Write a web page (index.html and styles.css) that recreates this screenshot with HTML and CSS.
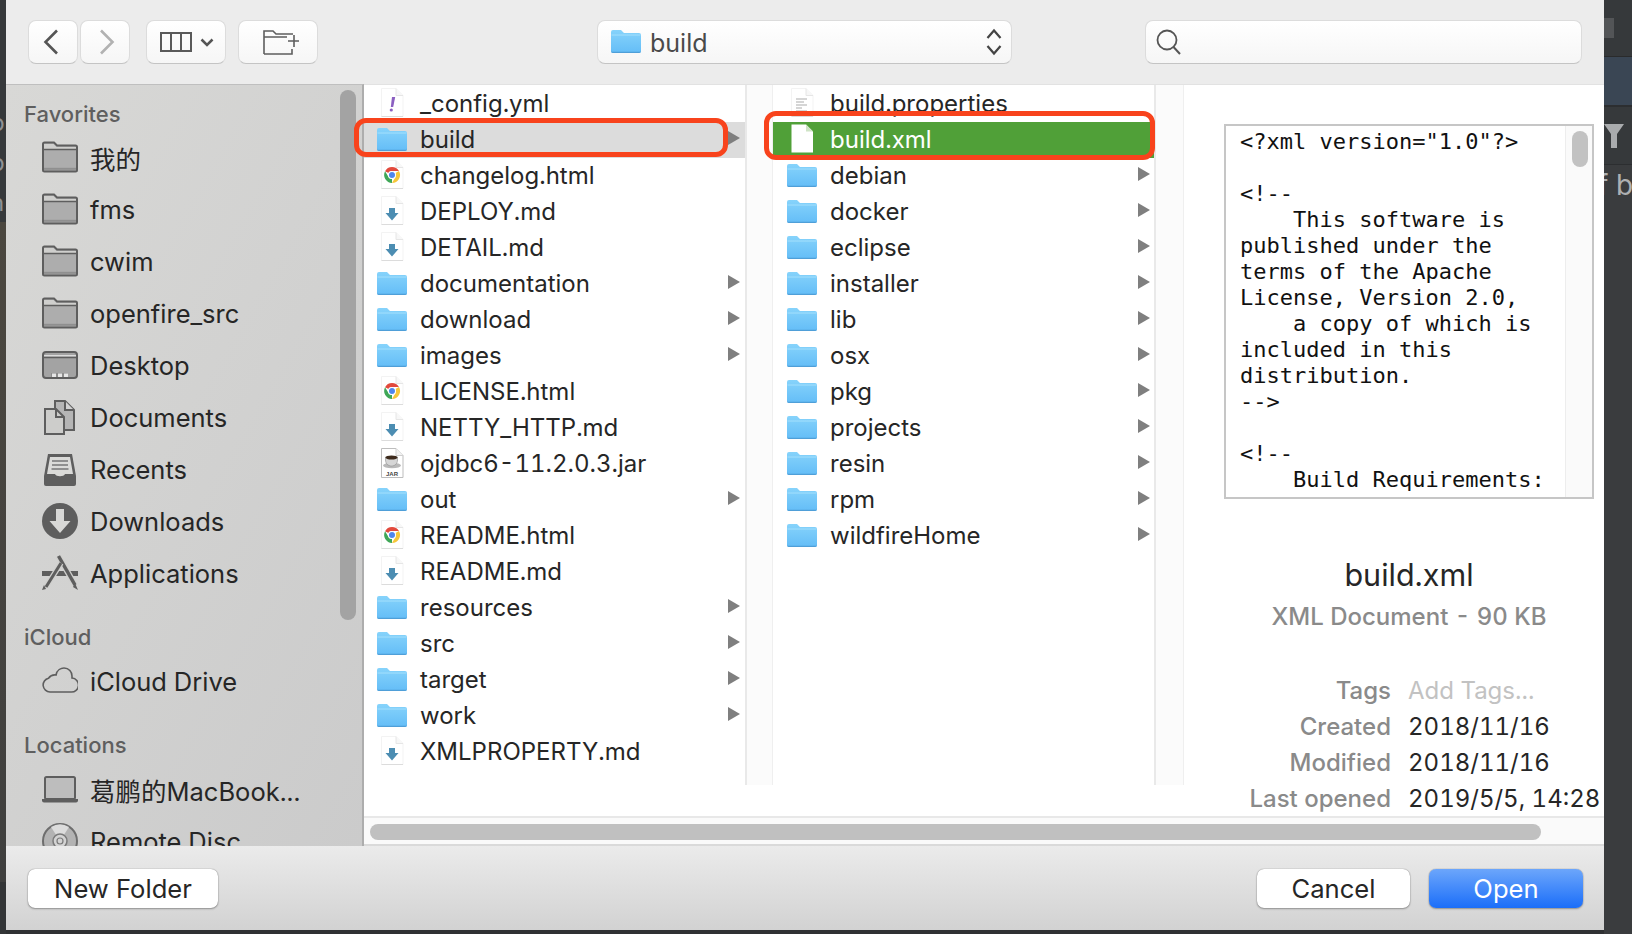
FILE: index.html
```html
<!DOCTYPE html>
<html lang="en">
<head>
<meta charset="utf-8">
<title>Open</title>
<link rel="stylesheet" href="styles.css">
</head>
<body>
<svg class="defs" width="0" height="0" aria-hidden="true">
  <defs>
    <linearGradient id="blue" x1="0" y1="0" x2="0" y2="1"><stop offset="0" stop-color="#86d3fb"/><stop offset="1" stop-color="#64bdf7"/></linearGradient>
    <symbol id="folder" viewBox="0 0 30 30">
      <path d="M0 6a2 2 0 0 1 2-2h8l3 3h15a2 2 0 0 1 2 2v16a2 2 0 0 1-2 2H2a2 2 0 0 1-2-2z" fill="url(#blue)"/>
      <path d="M0 25a2 2 0 0 0 2 2h26a2 2 0 0 0 2-2v-.7a1.5 1.5 0 0 1-1.500 1.500H1.500A1.500 1.500 0 0 1 0 24.300z" fill="#4f9fd8"/>
      <path d="M.5 9h29" stroke="#a3dffc" stroke-width="1"/>
    </symbol>
    <symbol id="page" viewBox="0 0 30 30">
      <path d="M4.500.5H19l7 7v21H4.500z" fill="#fff" stroke="#f3f3f3"/>
      <path d="M19 .5v7h7" fill="#f7f7f7" stroke="#e6e6e6"/>
      <path d="M4.500 28.500H26" stroke="#dcdcdc"/>
    </symbol>
    <symbol id="md" viewBox="0 0 30 30">
      <use href="#page"/>
      <path d="M12 12h6v5h3.500L15 24.500 8.500 17H12z" fill="#4c8db2"/>
    </symbol>
    <symbol id="chrome" viewBox="0 0 30 30">
      <use href="#page"/>
      <g transform="translate(15 15) scale(1.07) translate(-15 -15)">
        <path d="M15 7.500a7.500 7.500 0 0 1 6.500 3.750H15a3.750 3.750 0 0 0-3.250 1.900L8.500 11.500A7.500 7.500 0 0 1 15 7.500z" fill="#e2493c"/>
        <path d="M21.500 11.250A7.500 7.500 0 0 1 15 22.500l3.250-5.600a3.750 3.750 0 0 0 0-3.800z" fill="#f6c73a"/>
        <path d="M15 22.500A7.500 7.500 0 0 1 8.500 11.500l3.250 5.400a3.750 3.750 0 0 0 3.250 1.850z" fill="#3fa757"/>
        <circle cx="15" cy="15" r="3.300" fill="#4f86ec" stroke="#fff" stroke-width="1"/>
      </g>
    </symbol>
    <symbol id="yml" viewBox="0 0 30 30">
      <use href="#page"/>
      <path d="M15 9h3.200l-2 10h-2.400z" fill="#8b5fc1"/>
      <circle cx="14.300" cy="22" r="1.600" fill="#8b5fc1"/>
    </symbol>
    <symbol id="props" viewBox="0 0 30 30">
      <use href="#page"/>
      <path d="M9 11h11M9 14h8M9 17h11M9 20h6M9 23h11" stroke="#c8c8c8" stroke-width="1.300"/>
    </symbol>
    <symbol id="jar" viewBox="0 0 30 30">
      <path d="M4.500.5H19l7 7v22H4.500z" fill="#fff" stroke="#bdbdbd"/>
      <path d="M19 .5v7h7" fill="#f2f2f2" stroke="#cfcfcf"/>
      <ellipse cx="15" cy="17.500" rx="9" ry="2.800" fill="#b9b9b9"/>
      <path d="M8.500 9h12v3c0 3.500-2.500 6-6 6s-6-2.500-6-6z" fill="#d6d6d6" stroke="#8d8d8d" stroke-width=".6"/>
      <ellipse cx="14.500" cy="9.500" rx="6" ry="2" fill="#3d2a1c"/>
      <text x="15" y="27.500" class="jar-label">JAR</text>
    </symbol>
    <symbol id="sfolder" viewBox="0 0 36 36">
      <path d="M1 5a1.500 1.500 0 0 1 1.500-1.500h9.500l3 3h18.500A1.500 1.500 0 0 1 35 8v23a1.500 1.500 0 0 1-1.500 1.500h-31A1.500 1.500 0 0 1 1 31z" fill="#adadad" stroke="#5e5e5e" stroke-width="2"/>
      <path d="M2 5h9.500l3 3h19.500v3H2z" fill="#cfcfcd"/>
      <path d="M2 10.500h32" stroke="#5e5e5e" stroke-width="1.500"/>
      <path d="M2 29.800h32" stroke="#8f8f8f" stroke-width="2"/>
    </symbol>
    <symbol id="desktop" viewBox="0 0 36 36">
      <rect x="1" y="5" width="34" height="26" rx="3" fill="#a3a3a3" stroke="#5e5e5e" stroke-width="2"/>
      <path d="M2 8h32v1.500H2z" fill="#dcdcdc"/>
      <path d="M2 10.500h32" stroke="#5e5e5e" stroke-width="1.500"/>
      <path d="M9 26h17v4H9z" fill="#8d8d8d"/>
      <path d="M10 26.500h4v3.500h-4zM16 26.500h4v3.500h-4zM22 26.500h4v3.500h-4z" fill="#e6e6e6"/>
    </symbol>
    <symbol id="docs" viewBox="0 0 36 36">
      <path d="M13 2h10l9 9v20H13z" fill="#b5b5b5" stroke="#5e5e5e" stroke-width="2"/>
      <path d="M23 2v9h9" fill="#d2d2d2" stroke="#5e5e5e" stroke-width="2"/>
      <path d="M3 10h11l8 8v17H3z" fill="#cdcdcb" stroke="#5e5e5e" stroke-width="2"/>
      <path d="M14 10v8h8" fill="none" stroke="#5e5e5e" stroke-width="2"/>
    </symbol>
    <symbol id="recents" viewBox="0 0 36 36">
      <path d="M6 3h24l4 22v8a2 2 0 0 1-2 2H4a2 2 0 0 1-2-2v-8z" fill="#5e5e5e"/>
      <path d="M8 6h20l3 17h-8c-1 3-9 3-10 0H5z" fill="#dadad8"/>
      <path d="M10 10h16M10 14h16M9.500 18h17" stroke="#777" stroke-width="1.500"/>
    </symbol>
    <symbol id="downloads" viewBox="0 0 36 36">
      <circle cx="18" cy="18" r="18" fill="#5e5e5e"/>
      <path d="M14 6h8v12h6.500L18 30 7.500 18H14z" fill="#d8d8d6"/>
    </symbol>
    <symbol id="apps" viewBox="0 0 36 36">
      <path d="M0 16h36v5H0z" fill="#5e5e5e"/>
      <path d="M16.500 1 33 30" stroke="#d0d0ce" stroke-width="6"/>
      <path d="M16.500 1 33 30" stroke="#5e5e5e" stroke-width="3.500"/>
      <path d="m19 8-15 24" stroke="#d0d0ce" stroke-width="5.500"/>
      <path d="m19 8-15 24" stroke="#5e5e5e" stroke-width="3"/>
      <path d="m2 30-2 5 4-1zM33 28l3 7-5-3z" fill="#5e5e5e"/>
    </symbol>
    <symbol id="cloud" viewBox="0 0 36 36">
      <path d="M8 29a7 7 0 0 1-1.500-13.800A8 8 0 0 1 14 12c1-5 5-7 8-7 5 0 8 4 8 8v2a7 7 0 0 1-1 14z" fill="none" stroke="#5e5e5e" stroke-width="1.600"/>
    </symbol>
    <symbol id="laptop" viewBox="0 0 36 36">
      <rect x="3" y="6" width="30" height="22" rx="1.500" fill="#bdbdbd" stroke="#5e5e5e" stroke-width="2"/>
      <path d="M0 28h36v1.500a2 2 0 0 1-2 2H2a2 2 0 0 1-2-2z" fill="#5e5e5e"/>
    </symbol>
    <symbol id="disc" viewBox="0 0 36 36">
      <circle cx="18" cy="18" r="17" fill="#b3b3b3" stroke="#6e6e6e" stroke-width="2"/>
      <path d="M18 18 9 4a17 17 0 0 1 18 0z" fill="#dcdcdc"/>
      <path d="M18 18 9 32a17 17 0 0 0 18 0z" fill="#dcdcdc"/>
      <circle cx="18" cy="18" r="7" fill="#d3d3d3" stroke="#7a7a7a" stroke-width="1.500"/>
      <circle cx="18" cy="18" r="3" fill="none" stroke="#7a7a7a" stroke-width="1.200"/>
    </symbol>
  </defs>
</svg>

<div class="page">
  <div class="edge-left">
    <div class="el-dark"><span>b</span><span>p</span><span>n</span></div>
    <div class="el-brown"></div>
    <div class="el-dark2"></div>
  </div>

  <main class="dialog">
    <header class="toolbar">
      <div class="btn nav"><svg class="back-ic" width="16" height="26" viewBox="0 0 16 26"><path d="M14 1.500 2.500 13 14 24.500" fill="none" stroke="#555" stroke-width="2.600"/></svg></div>
      <div class="btn nav second"><svg class="fwd-ic" width="16" height="26" viewBox="0 0 16 26"><path d="M2 1.500 13.500 13 2 24.500" fill="none" stroke="#b2b2b2" stroke-width="2.600"/></svg></div>
      <div class="btn view">
        <svg width="32" height="20" viewBox="0 0 32 20"><path d="M1 1h30v18H1zM11 1v18M21 1v18" fill="none" stroke="#5a5a5a" stroke-width="2"/></svg>
        <svg width="14" height="9" viewBox="0 0 14 9"><path d="M1.500 1.500 7 7l5.500-5.500" fill="none" stroke="#555" stroke-width="2.500"/></svg>
      </div>
      <div class="btn newf">
        <svg width="36" height="26" viewBox="0 0 36 26"><path d="M1 25V2h9l3 3h17M1 8h23M29 20v5H1" fill="none" stroke="#5e5e5e" stroke-width="1.600"/><path d="M31 6v12M25 12h11" fill="none" stroke="#5e5e5e" stroke-width="1.600"/></svg>
      </div>
      <div class="btn path">
        <svg class="pf" width="30" height="30" viewBox="0 0 30 30"><use href="#folder"/></svg>
        <span class="path-name">build</span>
        <svg class="updown" width="18" height="28" viewBox="0 0 18 28"><path d="M2.500 10 9 2.500l6.500 7.500M2.500 18 9 25.500l6.500-7.500" fill="none" stroke="#444" stroke-width="2.200"/></svg>
      </div>
      <div class="btn search">
        <svg width="26" height="26" viewBox="0 0 26 26"><circle cx="11" cy="11" r="9.500" fill="none" stroke="#555" stroke-width="1.800"/><path d="m17.500 18 6.500 7" stroke="#555" stroke-width="2"/></svg>
      </div>
    </header>

    <div class="main">
      <aside class="sidebar">
        <h2 class="s-head">Favorites</h2>
        <div class="s-row"><svg class="s-ic"><use href="#sfolder"/></svg><span>我的</span></div>
        <div class="s-row"><svg class="s-ic"><use href="#sfolder"/></svg><span>fms</span></div>
        <div class="s-row"><svg class="s-ic"><use href="#sfolder"/></svg><span>cwim</span></div>
        <div class="s-row"><svg class="s-ic"><use href="#sfolder"/></svg><span>openfire_src</span></div>
        <div class="s-row"><svg class="s-ic"><use href="#desktop"/></svg><span>Desktop</span></div>
        <div class="s-row"><svg class="s-ic"><use href="#docs"/></svg><span>Documents</span></div>
        <div class="s-row"><svg class="s-ic"><use href="#recents"/></svg><span>Recents</span></div>
        <div class="s-row"><svg class="s-ic"><use href="#downloads"/></svg><span>Downloads</span></div>
        <div class="s-row"><svg class="s-ic"><use href="#apps"/></svg><span>Applications</span></div>
        <h2 class="s-head s-next">iCloud</h2>
        <div class="s-row"><svg class="s-ic"><use href="#cloud"/></svg><span>iCloud Drive</span></div>
        <h2 class="s-head s-next">Locations</h2>
        <div class="s-row"><svg class="s-ic"><use href="#laptop"/></svg><span>葛鹏的MacBook...</span></div>
        <div class="s-row"><svg class="s-ic"><use href="#disc"/></svg><span>Remote Disc</span></div>
        <div class="s-thumb"></div>
      </aside>

      <section class="browser">
        <div class="columns">
          <div class="col col-a">
            <div class="row"><svg class="ic"><use href="#yml"/></svg><span>_config.yml</span></div>
            <div class="row on-grey"><svg class="ic"><use href="#folder"/></svg><span>build</span><i class="arrow"></i></div>
            <div class="row"><svg class="ic"><use href="#chrome"/></svg><span>changelog.html</span></div>
            <div class="row"><svg class="ic"><use href="#md"/></svg><span>DEPLOY.md</span></div>
            <div class="row"><svg class="ic"><use href="#md"/></svg><span>DETAIL.md</span></div>
            <div class="row"><svg class="ic"><use href="#folder"/></svg><span>documentation</span><i class="arrow"></i></div>
            <div class="row"><svg class="ic"><use href="#folder"/></svg><span>download</span><i class="arrow"></i></div>
            <div class="row"><svg class="ic"><use href="#folder"/></svg><span>images</span><i class="arrow"></i></div>
            <div class="row"><svg class="ic"><use href="#chrome"/></svg><span>LICENSE.html</span></div>
            <div class="row"><svg class="ic"><use href="#md"/></svg><span>NETTY_HTTP.md</span></div>
            <div class="row"><svg class="ic"><use href="#jar"/></svg><span>ojdbc6-11.2.0.3.jar</span></div>
            <div class="row"><svg class="ic"><use href="#folder"/></svg><span>out</span><i class="arrow"></i></div>
            <div class="row"><svg class="ic"><use href="#chrome"/></svg><span>README.html</span></div>
            <div class="row"><svg class="ic"><use href="#md"/></svg><span>README.md</span></div>
            <div class="row"><svg class="ic"><use href="#folder"/></svg><span>resources</span><i class="arrow"></i></div>
            <div class="row"><svg class="ic"><use href="#folder"/></svg><span>src</span><i class="arrow"></i></div>
            <div class="row"><svg class="ic"><use href="#folder"/></svg><span>target</span><i class="arrow"></i></div>
            <div class="row"><svg class="ic"><use href="#folder"/></svg><span>work</span><i class="arrow"></i></div>
            <div class="row"><svg class="ic"><use href="#md"/></svg><span>XMLPROPERTY.md</span></div>
          </div>
          <div class="track"></div>
          <div class="col col-b">
            <div class="row"><svg class="ic"><use href="#props"/></svg><span>build.properties</span></div>
            <div class="row on-green"><svg class="ic" viewBox="0 0 30 30"><path d="M4.500.5H19l7 7v21H4.500z" fill="#fff"/><path d="M19 .5v7h7" fill="#cfe4c6"/></svg><span>build.xml</span></div>
            <div class="row"><svg class="ic"><use href="#folder"/></svg><span>debian</span><i class="arrow"></i></div>
            <div class="row"><svg class="ic"><use href="#folder"/></svg><span>docker</span><i class="arrow"></i></div>
            <div class="row"><svg class="ic"><use href="#folder"/></svg><span>eclipse</span><i class="arrow"></i></div>
            <div class="row"><svg class="ic"><use href="#folder"/></svg><span>installer</span><i class="arrow"></i></div>
            <div class="row"><svg class="ic"><use href="#folder"/></svg><span>lib</span><i class="arrow"></i></div>
            <div class="row"><svg class="ic"><use href="#folder"/></svg><span>osx</span><i class="arrow"></i></div>
            <div class="row"><svg class="ic"><use href="#folder"/></svg><span>pkg</span><i class="arrow"></i></div>
            <div class="row"><svg class="ic"><use href="#folder"/></svg><span>projects</span><i class="arrow"></i></div>
            <div class="row"><svg class="ic"><use href="#folder"/></svg><span>resin</span><i class="arrow"></i></div>
            <div class="row"><svg class="ic"><use href="#folder"/></svg><span>rpm</span><i class="arrow"></i></div>
            <div class="row"><svg class="ic"><use href="#folder"/></svg><span>wildfireHome</span><i class="arrow"></i></div>
          </div>
          <div class="track track-b"></div>
          <div class="preview">
            <div class="pv-box">
              <pre class="pv-code">&lt;?xml version="1.0"?&gt;

&lt;!--
    This software is
published under the
terms of the Apache
License, Version 2.0,
    a copy of which is
included in this
distribution.
--&gt;

&lt;!--
    Build Requirements:</pre>
              <div class="pv-scroll"><div class="pv-thumb"></div></div>
            </div>
            <div class="pv-name">build.xml</div>
            <div class="pv-kind">XML Document - 90 KB</div>
            <dl class="pv-info">
              <dt>Tags</dt><dd class="muted">Add Tags...</dd>
              <dt>Created</dt><dd>2018/11/16</dd>
              <dt>Modified</dt><dd>2018/11/16</dd>
              <dt>Last opened</dt><dd>2019/5/5, 14:28</dd>
            </dl>
          </div>
        </div>
        <div class="hscroll"><div class="hthumb"></div></div>
      </section>
    </div>

    <footer class="footer">
      <button class="fbtn new">New Folder</button>
      <button class="fbtn cancel">Cancel</button>
      <button class="fbtn open">Open</button>
    </footer>
  </main>

  <div class="edge-right">
    <div class="er-a"><div class="er-square"></div></div>
    <div class="er-blue"></div>
    <div class="er-b"><svg width="20" height="24" viewBox="0 0 20 24"><path d="M0 0h20l-7 10v14H7V10z" fill="#a9abad"/></svg></div>
    <div class="er-c"><span>f b</span></div>
  </div>

  <div class="mark mark-a"></div>
  <div class="mark mark-b"></div>
</div>
</body>
</html>
```
FILE: styles.css
```css
* { box-sizing: border-box; }
html, body { margin: 0; height: 100%; }
body { background: #2f3133; font-family: Inter, "Noto Sans CJK SC", sans-serif; font-variant-numeric: tabular-nums; overflow: hidden; }
.defs { position: absolute; }
.jar-label { font: 700 6px "Liberation Sans", sans-serif; text-anchor: middle; fill: #444; }

.page { position: relative; display: flex; width: 1632px; height: 934px; }

.edge-left { width: 6px; display: flex; flex-direction: column; overflow: hidden; }
.el-dark { height: 222px; background: #36393b; padding-top: 110px; display: flex; flex-direction: column; gap: 14px; overflow: hidden; }
.el-dark span { display: block; height: 26px; margin-left: -10px; font-size: 24px; line-height: 26px; color: #8f9193; }
.el-brown { height: 660px; background: linear-gradient(#4b473f, #3f3f3e); }
.el-dark2 { flex: 1; background: #333537; }

.dialog { width: 1598px; height: 930px; display: flex; flex-direction: column; background: #fff; color: #262626; }

.toolbar { height: 85px; flex: none; display: flex; align-items: flex-start; padding: 20px 22px 0; background: #ececec; border-bottom: 1px solid #e2e2e2; }
.btn { height: 44px; display: flex; align-items: center; justify-content: center; background: linear-gradient(#fff, #f6f6f6); border: 1px solid #dcdcdc; border-bottom-color: #c4c4c4; border-radius: 8px; }
.nav { width: 50px; }
.second { margin-left: 2px; }
.back-ic { margin-right: 4px; }
.fwd-ic { margin-left: 4px; }
.view { width: 80px; margin-left: 16px; gap: 8px; padding-left: 2px; }
.newf { width: 80px; margin-left: 12px; padding-left: 6px; }
.path { width: 415px; margin-left: 279px; justify-content: flex-start; padding: 0 8px 0 13px; }
.pf { margin-top: -2px; }
.path-name { margin-left: 9px; padding-top: 2px; font-size: 25px; color: #4a4a4a; }
.updown { margin-left: auto; }
.search { flex: 1; margin-left: 133px; justify-content: flex-start; padding-left: 10px; }

.main { height: 761px; flex: none; display: flex; }

.sidebar { position: relative; width: 358px; flex: none; overflow: hidden; padding-top: 15px; background: linear-gradient(120deg, #d8d8d6, #cbcbcb); border-right: 2px solid #adadad; border-top: 1px solid #bfbfbf; margin-top: -1px; }
.s-head { margin: 0 0 3px 18px; font-size: 22px; line-height: 28px; font-weight: 500; color: #5f5f5f; }
.s-next { margin-top: 24px; margin-bottom: 4px; }
.s-row { height: 52px; display: flex; align-items: center; padding-left: 36px; gap: 12px; font-size: 25.500px; color: #262626; white-space: nowrap; }
.s-ic { width: 36px; height: 36px; flex: none; }
.s-thumb { position: absolute; left: 334px; top: 5px; width: 16px; height: 530px; border-radius: 8px; background: #a3a3a3; }

.browser { flex: 1; display: flex; flex-direction: column; min-width: 0; }
.columns { height: 731px; flex: none; display: flex; background: #fff; overflow: hidden; }
.col { width: 381px; flex: none; padding-top: 1px; height: 700px; overflow: hidden; }
.track { width: 28px; height: 700px; flex: none; background: #fbfbfb; border-left: 2px solid #e9e9e9; border-right: 1px solid #efefef; }
.track-b { width: 30px; }
.row { height: 36px; display: flex; align-items: center; padding-right: 5px; padding-bottom: 2px; font-size: 24px; white-space: nowrap; }
.col-a .row { padding-left: 13px; }
.col-b .row { padding-left: 14px; padding-right: 4px; }
.ic { width: 30px; height: 30px; flex: none; margin: -1px 13px 0 0; }
.arrow { margin-left: auto; width: 0; height: 0; margin-top: -2px; border-left: 12px solid #7f7f7f; border-top: 7px solid transparent; border-bottom: 7px solid transparent; }
.on-grey { background: #dcdcdc; }
.on-green { background: #50a038; color: #fff; }

.preview { flex: 1; min-width: 0; }
.pv-box { display: flex; width: 370px; height: 375px; margin: 39px 0 0 40px; border: 2px solid #c6c6c6; overflow: hidden; }
.pv-code { flex: 1; margin: 0; padding: 3px 0 0 14px; font: 22px/26px "DejaVu Sans Mono", monospace; color: #111; overflow: hidden; }
.pv-scroll { width: 27px; flex: none; background: #fafafa; border-left: 1px solid #ededed; padding: 5px 0 0 6px; }
.pv-thumb { width: 16px; height: 36px; border-radius: 8px; background: #c2c2c2; }
.pv-name { width: 370px; margin: 56px 0 0 40px; text-align: center; font-size: 30.500px; line-height: 40px; }
.pv-kind { width: 370px; margin: 7px 0 0 40px; text-align: center; font-size: 24px; font-weight: 500; line-height: 30px; color: #8a8a8a; }
.pv-info { display: grid; grid-template-columns: 207px auto; column-gap: 17px; margin: 41px 0 0; grid-auto-rows: 36px; font-size: 24px; line-height: 36px; white-space: nowrap; }
.pv-info dt { text-align: right; font-weight: 500; color: #8a8a8a; }
.pv-info dd { margin: 0; }
.pv-info .muted { color: #c2c2c2; }

.hscroll { height: 30px; flex: none; padding: 6px 0 0 6px; background: #fafafa; border-top: 2px solid #e8e8e8; border-bottom: 2px solid #dadada; }
.hthumb { width: 1171px; height: 16px; border-radius: 8px; background: #c0c0c0; }

.footer { flex: 1; display: flex; align-items: flex-start; padding: 23px 21px 0 22px; background: linear-gradient(#ebebeb, #d2d2d2); }
.fbtn { height: 39px; border: 0; border-radius: 7px; font-family: inherit; font-size: 25.600px; color: #262626; background: #fff; box-shadow: 0 0 1px rgba(0, 0, 0, .5), 0 1px 2px rgba(0, 0, 0, .3); }
.new { width: 190px; }
.cancel { width: 153px; margin-left: auto; }
.open { width: 154px; margin-left: 19px; color: #fff; background: linear-gradient(#6ca6fb, #1b6ef9); }

.edge-right { width: 28px; display: flex; flex-direction: column; overflow: hidden; }
.er-a { height: 57px; flex: none; padding-top: 18px; background: #36393b; border-bottom: 1px solid #2a2b2c; }
.er-square { width: 10px; height: 20px; background: #535557; }
.er-blue { height: 50px; flex: none; background: #3a4654; border-bottom: 2px solid #2c2e30; }
.er-b { height: 58px; flex: none; padding-top: 17px; background: #36393b; border-bottom: 1px solid #2c2e30; }
.er-c { flex: 1; background: #3a3c3e; padding-top: 3px; font-size: 28px; line-height: 34px; color: #aeb0b2; white-space: nowrap; }
.er-c span { display: inline-block; margin-left: -6px; }

.mark { position: absolute; border: 5px solid #f8431c; border-radius: 12px; }
.mark-a { left: 354px; top: 118px; width: 374px; height: 39px; }
.mark-b { left: 764px; top: 111px; width: 391px; height: 49px; }
```
